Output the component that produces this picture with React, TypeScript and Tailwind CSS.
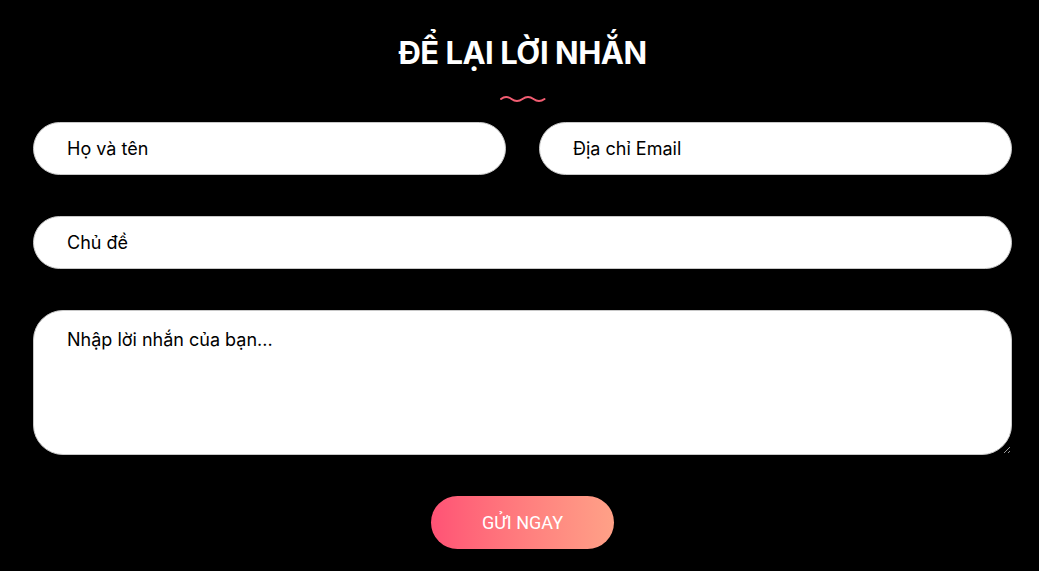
import React from "react";

const field =
  "h-[53px] w-full rounded-[27px] border border-[#c8c8c8] bg-white px-[33px] text-[18px] text-black outline-none placeholder:text-black";

export default function App() {
  return (
    <div className="min-h-[571px] w-full bg-black font-['Inter','Noto_Sans',sans-serif]">
      <div className="pl-[33px] pr-[27px] pt-[33px]">
        <h2 className="text-center text-[31px] font-bold leading-[40px] tracking-[-0.5px] text-white">
          ĐỂ LẠI LỜI NHẮN
        </h2>
        <div className="mt-[22px] flex justify-center">
          <svg width="46" height="10" viewBox="0 0 46 10" fill="none">
            <path
              d="M1 4 Q6 0 11.5 4 T22.5 4 T33.5 4 T44.5 4"
              stroke="#f25d72"
              strokeWidth="2"
              strokeLinecap="round"
              fill="none"
            />
          </svg>
        </div>
        <form className="mt-[17px] flex flex-col gap-[41px]">
          <div className="grid grid-cols-2 gap-[33px]">
            <input className={field} placeholder="Họ và tên" />
            <input className={field} placeholder="Địa chỉ Email" />
          </div>
          <input className={field} placeholder="Chủ đề" />
          <textarea
            className="h-[145px] w-full rounded-[30px] border border-[#c8c8c8] bg-white px-[33px] pt-[15px] text-[18px] text-black outline-none placeholder:text-black"
            placeholder="Nhập lời nhắn của bạn..."
          />
          <div className="flex justify-center">
            <button
              type="button"
              className="h-[53px] w-[183px] rounded-full bg-gradient-to-r from-[#ff5275] to-[#ffa187] font-['Roboto',sans-serif] text-[18px] text-white"
            >
              GỬI NGAY
            </button>
          </div>
        </form>
      </div>
    </div>
  );
}
